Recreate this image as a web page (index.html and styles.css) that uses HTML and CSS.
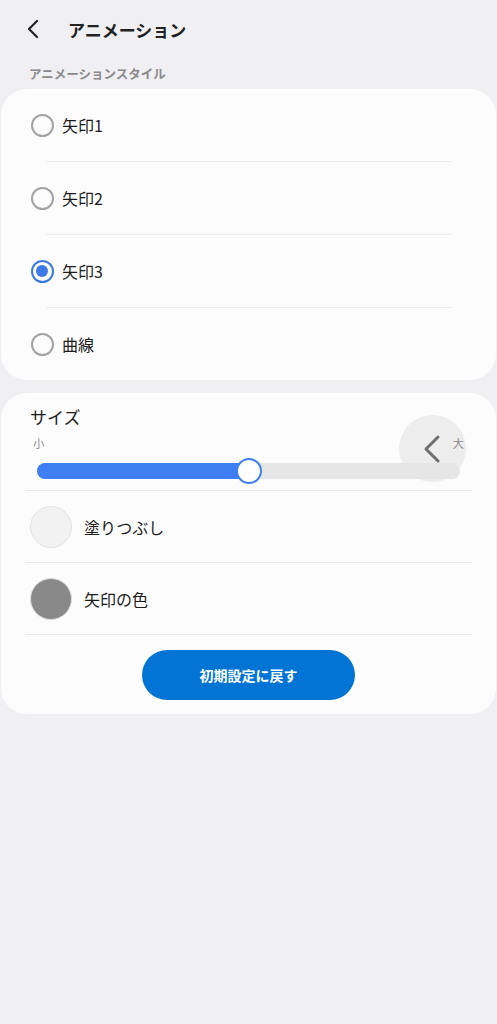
FILE: index.html
```html
<!DOCTYPE html>
<html lang="ja">
<head>
<meta charset="utf-8">
<link rel="stylesheet" href="styles.css">
</head>
<body>
<header class="topbar">
  <svg class="back" width="16" height="22" viewBox="0 0 16 22"><path d="M12 3 L4 11 L12 19" fill="none" stroke="#222" stroke-width="2.2" stroke-linecap="round" stroke-linejoin="round"/></svg>
  <h1 class="title">アニメーション</h1>
</header>
<div class="section-label">アニメーションスタイル</div>
<section class="card styles">
  <div class="radio-row"><span class="radio"></span><span class="label">矢印1</span></div>
  <div class="sep"></div>
  <div class="radio-row"><span class="radio"></span><span class="label">矢印2</span></div>
  <div class="sep"></div>
  <div class="radio-row"><span class="radio checked"></span><span class="label">矢印3</span></div>
  <div class="sep"></div>
  <div class="radio-row"><span class="radio"></span><span class="label">曲線</span></div>
</section>
<section class="card settings">
  <div class="size-title">サイズ</div>
  <div class="size-labels"><span>小</span><span>大</span></div>
  <div class="slider">
    <div class="track">
      <div class="fill" style="width:50.1%"></div>
      <div class="thumb" style="left:50.1%"></div>
    </div>
  </div>
  <div class="fab">
    <svg width="22" height="30" viewBox="0 0 22 30"><path d="M17 3 L5 15 L17 27" fill="none" stroke="#6f6f6f" stroke-width="3" stroke-linecap="round" stroke-linejoin="round"/></svg>
  </div>
  <div class="line"></div>
  <div class="color-row"><span class="swatch fill-swatch"></span><span class="label">塗りつぶし</span></div>
  <div class="line"></div>
  <div class="color-row"><span class="swatch arrow-swatch"></span><span class="label">矢印の色</span></div>
  <div class="line"></div>
  <div class="btn-wrap"><button class="reset">初期設定に戻す</button></div>
</section>
</body>
</html>
```
FILE: styles.css
```css
* { box-sizing: border-box; }
body {
  margin: 0;
  background: #f0f0f3;
  font-family: "Noto Sans CJK JP", "Noto Sans", Roboto, sans-serif;
  color: #1c1c1c;
}
.topbar {
  height: 58px;
  display: flex;
  align-items: center;
  padding-left: 25px;
}
.back { display: block; }
.title {
  margin: 0 0 0 27px;
  font-size: 17px;
  font-weight: 700;
  color: #222;
}
.section-label {
  padding-left: 29px;
  height: 31px;
  line-height: 32px;
  font-size: 12.5px;
  font-weight: 700;
  color: #8a8a8a;
}
.card {
  margin: 0 1px;
  background: #fcfcfc;
  border-radius: 26px;
}
.styles { display: flex; flex-direction: column; }
.radio-row {
  height: 72px;
  display: flex;
  align-items: center;
  padding-left: 30px;
}
.sep {
  height: 1px;
  margin: 0 45px;
  background: #ececec;
}
.radio {
  width: 23px;
  height: 23px;
  border-radius: 50%;
  border: 2px solid #a3a3a3;
  position: relative;
  flex: none;
}
.radio.checked { border: 2.5px solid #3b7ae6; }
.radio.checked::after {
  content: "";
  position: absolute;
  left: 3px; top: 3px;
  width: 12px; height: 12px;
  border-radius: 50%;
  background: #3b7ae6;
}
.label {
  margin-left: 8px;
  font-size: 16px;
  color: #1c1c1c;
}
.settings {
  margin-top: 13px;
  position: relative;
  padding-bottom: 14px;
}
.size-title {
  padding: 12px 0 0 29px;
  font-size: 17px;
  line-height: 24px;
}
.size-labels {
  position: relative;
  z-index: 2;
  display: flex;
  justify-content: space-between;
  padding: 0 32px 0 32px;
  font-size: 11.5px;
  line-height: 18px;
  color: #8c8c8c;
  margin-top: 5px;
}
.slider {
  position: relative;
  z-index: 2;
  padding: 11px 36px 11px 36px;
}
.track {
  position: relative;
  height: 16px;
  border-radius: 8px;
  background: #e6e6e6;
}
.fill {
  height: 100%;
  border-radius: 8px;
  background: #3d7ef2;
}
.thumb {
  position: absolute;
  top: 50%;
  width: 26px;
  height: 26px;
  margin: -13px 0 0 -13px;
  border-radius: 50%;
  background: #fff;
  border: 2.5px solid #3d7ef2;
}
.fab {
  position: absolute;
  z-index: 1;
  left: 398px;
  top: 22px;
  width: 67px;
  height: 67px;
  border-radius: 50%;
  background: rgba(232,232,232,0.75);
  display: flex;
  align-items: center;
  justify-content: flex-start;
  padding-left: 22px;
}
.fab svg { display: block; }
.line {
  height: 1px;
  margin: 0 24px;
  background: #e8e8e8;
}
.color-row {
  height: 71px;
  display: flex;
  align-items: center;
  padding-left: 29px;
}
.color-row .label { margin-left: 12px; }
.swatch {
  width: 42px;
  height: 42px;
  border-radius: 50%;
  flex: none;
}
.fill-swatch { background: #f2f2f2; border: 1px solid #e2e2e2; }
.arrow-swatch { background: #898989; border: 1px solid #dcdcdc; }
.btn-wrap {
  display: flex;
  justify-content: center;
  padding-top: 15px;
}
.reset {
  width: 213px;
  height: 50px;
  border: none;
  border-radius: 25px;
  background: #0274d4;
  color: #fff;
  font-family: "Noto Sans CJK JP", sans-serif;
  font-size: 14px;
  font-weight: 700;
}
```
